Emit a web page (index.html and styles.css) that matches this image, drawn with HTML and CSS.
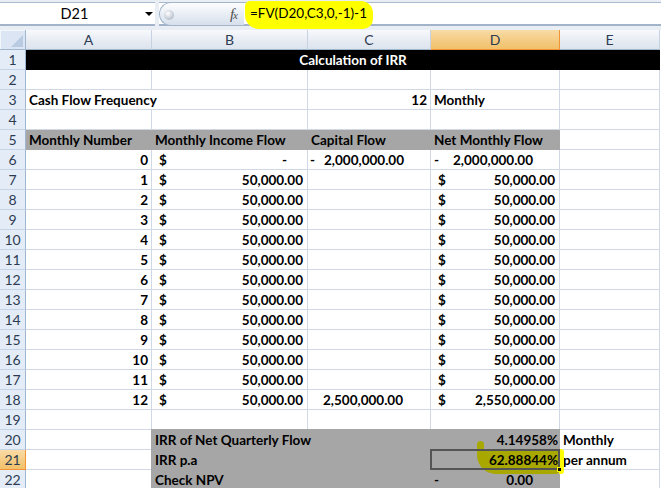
FILE: index.html
```html
<!DOCTYPE html>
<html>
<head>
<meta charset="utf-8">
<link rel="stylesheet" href="styles.css">
</head>
<body>
<div class="top">
  <div class="fbar">
    <div class="namebox">D21<span class="arrow"></span></div>
    <div class="spacer"></div>
    <div class="pill"><span class="knob"></span><span class="fx"><i>f</i><i class="x">x</i></span></div>
    <div class="formula"><span class="hl"></span><span class="ftext">=FV(D20,C3,0,-1)-1</span></div>
  </div>
</div>
<div class="sheet">
  <div class="corner"><span class="tri"></span></div>
  <div class="ch">A</div><div class="ch">B</div><div class="ch">C</div><div class="ch sel">D</div><div class="ch">E</div>

  <div class="rh">1</div><div class="c title">Calculation of IRR</div>

  <div class="rh">2</div><div class="c"></div><div class="c"></div><div class="c"></div><div class="c"></div><div class="c"></div>

  <div class="rh">3</div><div class="c span2">Cash Flow Frequency</div><div class="c r">12</div><div class="c">Monthly</div><div class="c"></div>

  <div class="rh">4</div><div class="c"></div><div class="c"></div><div class="c"></div><div class="c"></div><div class="c"></div>

  <div class="rh">5</div><div class="c gray">Monthly Number</div><div class="c gray">Monthly Income Flow</div><div class="c gray">Capital Flow</div><div class="c gray">Net Monthly Flow</div><div class="c"></div>

  <div class="rh">6</div><div class="c r">0</div><div class="c acc"><span>$</span><span class="dash">-</span></div><div class="c neg"><span>-</span><span>2,000,000.00</span></div><div class="c negd"><span>-</span><span>2,000,000.00</span></div><div class="c"></div>

  <div class="rh">7</div><div class="c r">1</div><div class="c acc"><span>$</span><span>50,000.00</span></div><div class="c"></div><div class="c acc"><span>$</span><span>50,000.00</span></div><div class="c"></div>
  <div class="rh">8</div><div class="c r">2</div><div class="c acc"><span>$</span><span>50,000.00</span></div><div class="c"></div><div class="c acc"><span>$</span><span>50,000.00</span></div><div class="c"></div>
  <div class="rh">9</div><div class="c r">3</div><div class="c acc"><span>$</span><span>50,000.00</span></div><div class="c"></div><div class="c acc"><span>$</span><span>50,000.00</span></div><div class="c"></div>
  <div class="rh">10</div><div class="c r">4</div><div class="c acc"><span>$</span><span>50,000.00</span></div><div class="c"></div><div class="c acc"><span>$</span><span>50,000.00</span></div><div class="c"></div>
  <div class="rh">11</div><div class="c r">5</div><div class="c acc"><span>$</span><span>50,000.00</span></div><div class="c"></div><div class="c acc"><span>$</span><span>50,000.00</span></div><div class="c"></div>
  <div class="rh">12</div><div class="c r">6</div><div class="c acc"><span>$</span><span>50,000.00</span></div><div class="c"></div><div class="c acc"><span>$</span><span>50,000.00</span></div><div class="c"></div>
  <div class="rh">13</div><div class="c r">7</div><div class="c acc"><span>$</span><span>50,000.00</span></div><div class="c"></div><div class="c acc"><span>$</span><span>50,000.00</span></div><div class="c"></div>
  <div class="rh">14</div><div class="c r">8</div><div class="c acc"><span>$</span><span>50,000.00</span></div><div class="c"></div><div class="c acc"><span>$</span><span>50,000.00</span></div><div class="c"></div>
  <div class="rh">15</div><div class="c r">9</div><div class="c acc"><span>$</span><span>50,000.00</span></div><div class="c"></div><div class="c acc"><span>$</span><span>50,000.00</span></div><div class="c"></div>
  <div class="rh">16</div><div class="c r">10</div><div class="c acc"><span>$</span><span>50,000.00</span></div><div class="c"></div><div class="c acc"><span>$</span><span>50,000.00</span></div><div class="c"></div>
  <div class="rh">17</div><div class="c r">11</div><div class="c acc"><span>$</span><span>50,000.00</span></div><div class="c"></div><div class="c acc"><span>$</span><span>50,000.00</span></div><div class="c"></div>
  <div class="rh">18</div><div class="c r">12</div><div class="c acc"><span>$</span><span>50,000.00</span></div><div class="c cap">2,500,000.00</div><div class="c acc"><span>$</span><span>2,550,000.00</span></div><div class="c"></div>

  <div class="rh">19</div><div class="c"></div><div class="c"></div><div class="c"></div><div class="c"></div><div class="c"></div>

  <div class="rh">20</div><div class="c"></div><div class="c gray span2 band first">IRR of Net Quarterly Flow</div><div class="c gray band r pct">4.14958%</div><div class="c">Monthly</div>

  <div class="rh rsel">21</div><div class="c"></div><div class="c gray first">IRR p.a</div><div class="c gray"></div><div class="c gray r pct active"><span class="hl2"></span><span class="tail"></span><span class="hl3"></span><span class="selbox"></span><span class="val">62.88844%</span><span class="handle"></span></div><div class="c pa">per annum</div>

  <div class="rh">22</div><div class="c"></div><div class="c gray first">Check NPV</div><div class="c gray"></div><div class="c gray negd"><span>-</span><span>0.00</span></div><div class="c"></div>
</div>
</body>
</html>
```

FILE: styles.css
```css
* { box-sizing: border-box; }
html, body { margin: 0; padding: 0; }
body {
  width: 661px;
  height: 488px;
  overflow: hidden;
  background: #fff;
  font-family: Lato, "Liberation Sans", sans-serif;
}

/* formula bar */
.top {
  height: 30px;
  background: #e9eef5;
  padding: 2px 0 4px;
}
.fbar {
  display: flex;
  height: 24px;
  background: #fff;
  border-top: 1px solid #a9bad0;
  border-bottom: 2px solid #a3b4ca;
}
.namebox {
  width: 155px;
  position: relative;
  text-align: center;
  font-size: 14.5px;
  line-height: 21px;
  color: #000;
  padding-right: 6px;
}
.namebox .arrow {
  position: absolute;
  right: 2px;
  top: 9px;
  width: 0;
  height: 0;
  border-left: 4px solid transparent;
  border-right: 4px solid transparent;
  border-top: 4px solid #000;
}
.spacer {
  width: 4px;
  margin: -1px 0 -2px;
  background: #e9eef5;
}
.pill {
  position: relative;
  width: 85px;
  margin: -1px 0 -2px;
  border: 1px solid #a3b5cb;
  border-right: none;
  border-radius: 12px 0 0 12px;
  background: linear-gradient(#fdfdfe, #e7edf4 55%, #d6dfeb);
}
.knob {
  position: absolute;
  left: 4px;
  top: 7px;
  width: 10px;
  height: 10px;
  border-radius: 50%;
  background: radial-gradient(circle at 40% 35%, #fff, #c4cbd5 60%, #98a2b0);
}
.fx {
  position: absolute;
  right: 7px;
  top: 3px;
  font-family: "Liberation Serif", serif;
  font-size: 15px;
  color: #4d4d4d;
  letter-spacing: -1px;
}
.fx .x { font-size: 11px; }
.formula {
  position: relative;
  flex: 1;
}
.formula .hl {
  position: absolute;
  left: 1px;
  top: -2px;
  width: 128px;
  height: 28px;
  background: #ffff00;
  border-radius: 5px 12px 10px 14px;
}
.formula .ftext {
  position: relative;
  display: block;
  padding-left: 6px;
  font-size: 13.5px;
  line-height: 21px;
  color: #000;
}

/* sheet */
.sheet {
  display: grid;
  grid-template-columns: 26px 126px 156px 123px 129px 100px;
  grid-auto-rows: 20px;
}
.corner {
  position: relative;
  background: #dbe5f3;
  border-right: 1px solid #9eb6ce;
  border-bottom: 1px solid #9eb6ce;
  box-shadow: inset 1px 1px 0 #f3f7fc;
}
.corner .tri {
  position: absolute;
  right: 2px;
  bottom: 2px;
  width: 0;
  height: 0;
  border-left: 12px solid transparent;
  border-bottom: 12px solid #b9cbe2;
}
.ch {
  background: linear-gradient(#f7f9fc, #e6ebf2 60%, #dde4ee);
  border-right: 1px solid #c6d2e2;
  border-bottom: 1px solid #9eb6ce;
  text-align: center;
  font-size: 14px;
  line-height: 19px;
  color: #2c3b52;
}
.ch.sel {
  background: linear-gradient(#f9dba6, #f4ca80 60%, #f1c16b);
  border-right: 1px solid #f29436;
  border-bottom: 1px solid #f29436;
}
.rh {
  background: #e4ecf7;
  border-right: 1px solid #9eb6ce;
  border-bottom: 1px solid #c5d3e6;
  text-align: center;
  font-size: 14px;
  line-height: 19px;
  color: #2c3b52;
}
.rh.rsel {
  background: linear-gradient(#f9dba6, #f4ca80 60%, #f1c16b);
  border-right: 1px solid #f29436;
  border-bottom: 1px solid #f29436;
}

.c {
  position: relative;
  border-right: 1px solid #d0d7e5;
  border-bottom: 1px solid #d0d7e5;
  padding: 0 3px;
  font-size: 13.5px;
  font-weight: 700;
  line-height: 20px;
  color: #000;
  white-space: nowrap;
}
.c.r { text-align: right; }
.span2 { grid-column: span 2; }
.title {
  grid-column: span 5;
  background: #000;
  border-color: #000;
  color: #fff;
  text-align: center;
  padding-left: 24px;
}
.gray {
  background: #a6a6a6;
  border-color: #a6a6a6;
}
.band { margin-top: -1px; padding-top: 1px; }
.first { margin-left: -1px; padding-left: 4px; }
.acc {
  display: flex;
  justify-content: space-between;
  padding: 0 4px 0 7px;
}
.acc .dash { padding-right: 16px; }
.neg {
  display: flex;
  justify-content: space-between;
  padding: 0 26px 0 2px;
}
.negd {
  display: flex;
  justify-content: space-between;
  padding: 0 26px 0 3px;
}
.cap {
  text-align: right;
  padding-right: 27px;
}
.pct { padding-right: 1px; }
.pa { padding-left: 3px; }

.active .val { position: relative; z-index: 2; }
.hl2 {
  position: absolute;
  left: 46px;
  top: -1px;
  width: 83px;
  height: 25px;
  background: #a8a800;
  border-radius: 8px 0 6px 26px;
  z-index: 1;
}
.tail {
  position: absolute;
  left: 46px;
  top: -9px;
  width: 7px;
  height: 14px;
  background: #a8a800;
  border-radius: 4px 4px 0 0;
  z-index: 1;
}
.hl3 {
  position: absolute;
  right: -5px;
  top: -1px;
  width: 5px;
  height: 25px;
  background: #ffff00;
  border-radius: 0 3px 3px 0;
  z-index: 1;
}
.selbox {
  position: absolute;
  left: -1px;
  top: -1px;
  right: -1px;
  bottom: -1px;
  border: 2px solid #555;
  z-index: 3;
}
.handle {
  position: absolute;
  right: -3px;
  bottom: -3px;
  width: 5px;
  height: 5px;
  background: #000;
  border: 1px solid #ffff00;
  z-index: 4;
}
```
